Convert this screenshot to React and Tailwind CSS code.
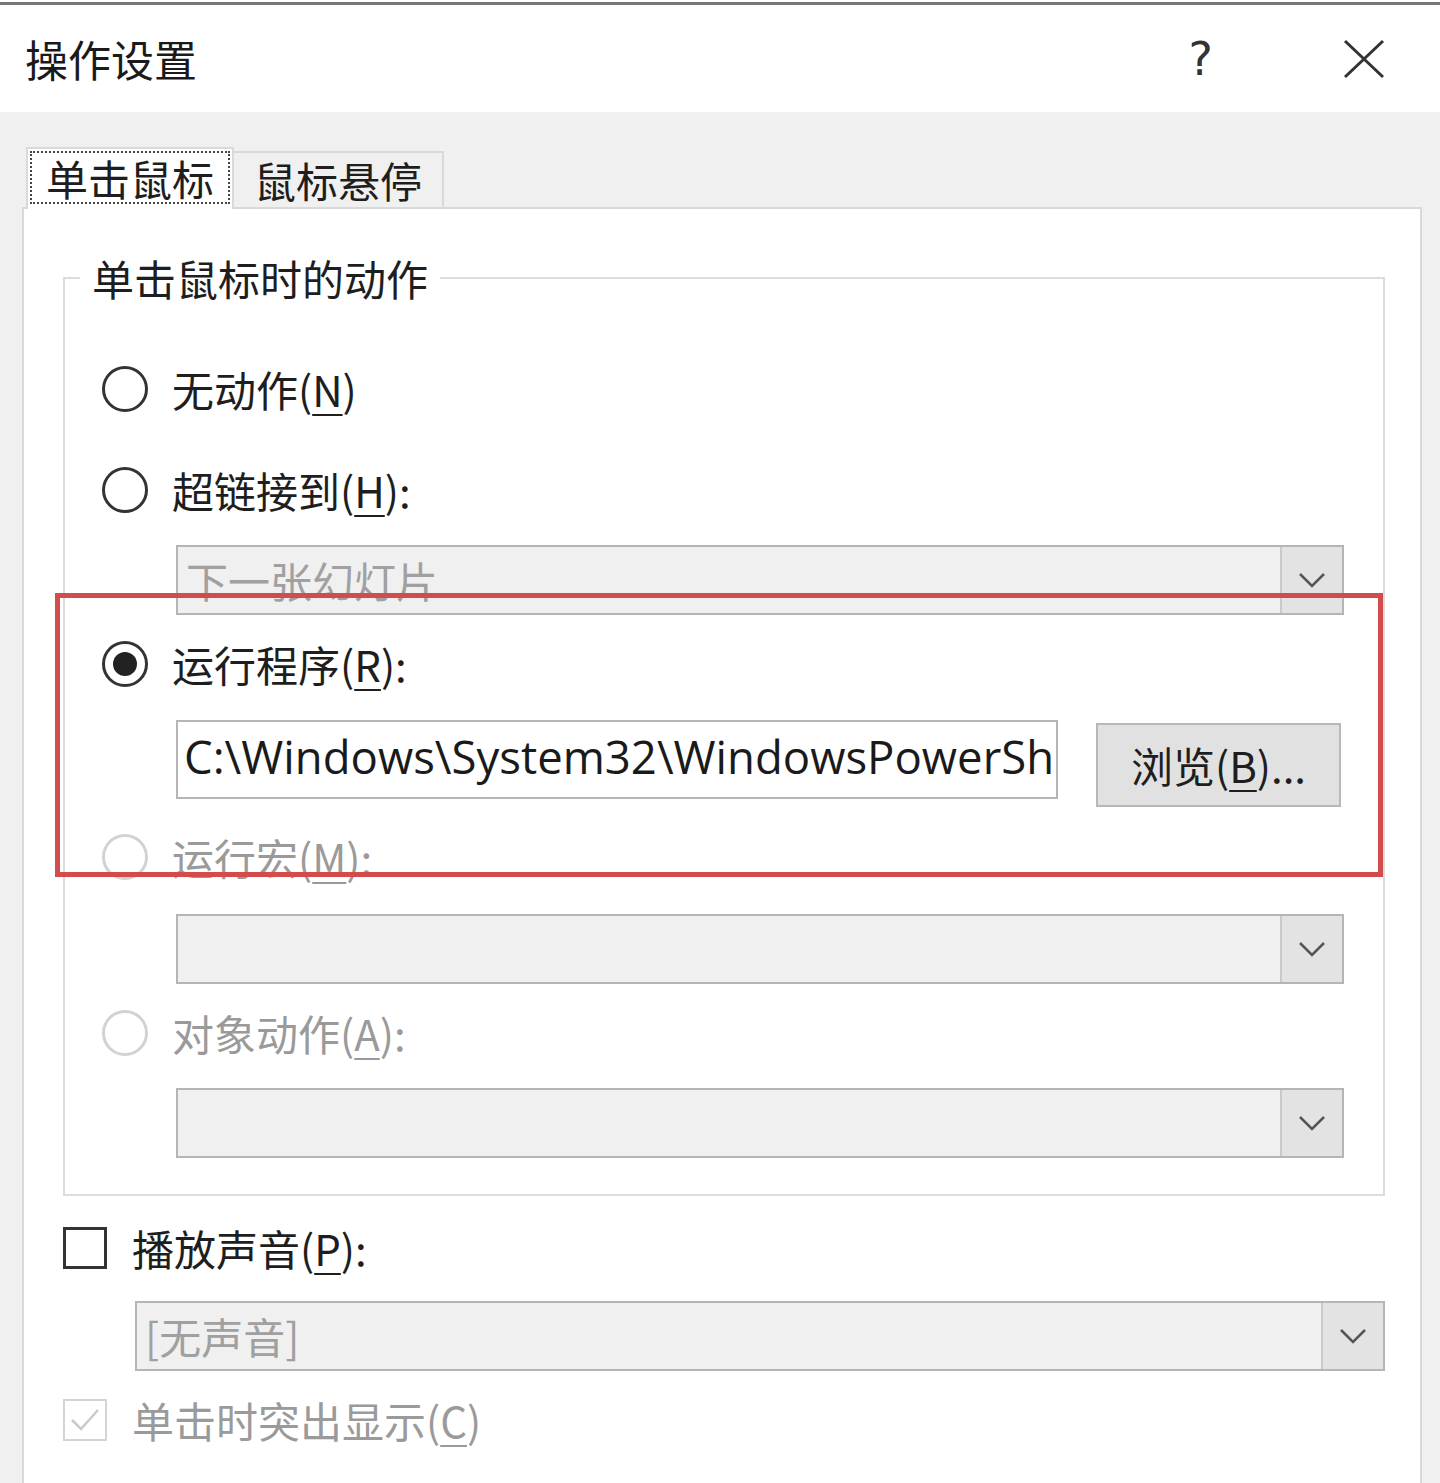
import React from 'react';

const Chevron = () => (
  <svg width="28" height="16" viewBox="0 0 28 16" fill="none">
    <path d="M2 2 L14 14 L26 2" stroke="#555" strokeWidth="2.5" />
  </svg>
);

const Key = ({ children }) => (
  <span className="underline underline-offset-[7px] decoration-[2px]">{children}</span>
);

// combo box, disabled look
const Combo = ({ text, className }) => (
  <div className={"flex h-[70px] border-2 border-[#b5b5b5] bg-[#f0f0f0] " + className}>
    <div className="flex-1 pl-[8px] flex items-center text-[42px] text-[#a0a0a0] leading-none overflow-hidden whitespace-nowrap">
      {text}
    </div>
    <div className="w-[62px] bg-[#e3e3e3] border-l-2 border-[#cacaca] flex items-center justify-center">
      <Chevron />
    </div>
  </div>
);

const Radio = ({ checked, disabled }) => (
  <div
    className={
      "w-[46px] h-[46px] rounded-full border-[3px] flex items-center justify-center shrink-0 " +
      (disabled ? "border-[#d2d2d2]" : "border-[#333]")
    }
  >
    {checked && <div className="w-[24px] h-[24px] rounded-full bg-[#222]" />}
  </div>
);

const RadioRow = ({ checked, disabled, children, className }) => (
  <div className={"flex items-center h-[60px] pl-[37px] " + className}>
    <Radio checked={checked} disabled={disabled} />
    <span
      className={
        "ml-[24px] text-[42px] leading-none " + (disabled ? "text-[#9a9a9a]" : "text-[#1e1e1e]")
      }
    >
      {children}
    </span>
  </div>
);

export default function App() {
  return (
    <div className="w-[1440px] h-[1483px] overflow-hidden bg-[#f0f0f0] relative font-['Noto_Sans_CJK_SC','Noto_Sans',sans-serif]">
      {/* title bar */}
      <div className="bg-white">
        <div className="h-[2px]" />
        <div className="h-[3px] bg-[#767676]" />
        <div className="h-[107px] flex items-center pl-[25px] pr-[55px]">
          <span className="text-[43px] text-[#1a1a1a] leading-none">操作设置</span>
          <span className="ml-auto text-[46px] text-[#333] font-['DejaVu_Sans',sans-serif] leading-none">?</span>
          <svg className="ml-[130px]" width="42" height="40" viewBox="0 0 42 40">
            <path d="M2 2 L40 38 M40 2 L2 38" stroke="#333" strokeWidth="3" />
          </svg>
        </div>
      </div>

      {/* tabs + page */}
      <div className="pt-[35px] pl-[22px] pr-[18px]">
        <div className="flex items-end -mb-[2px]">
          <div className="ml-[4px] w-[208px] h-[62px] bg-white border-2 border-b-0 border-[#d9d9d9] relative z-10 p-[2px]">
            <div className="h-[53px] border-2 border-dotted border-[#444] flex items-center justify-center text-[42px] text-[#1e1e1e] leading-none">
              单击鼠标
            </div>
          </div>
          <div className="w-[210px] h-[58px] bg-[#f0f0f0] border-2 border-l-0 border-[#d9d9d9] flex items-center justify-center text-[42px] text-[#1e1e1e] leading-none">
            鼠标悬停
          </div>
        </div>

        <div className="bg-white border-2 border-[#d9d9d9] h-[1300px] pl-[39px] pr-[35px]">
          <fieldset className="mt-[45px] border-2 border-[#dcdcdc] pb-[36px]">
            <legend className="ml-[15px] px-[12px] h-[48px] leading-[48px] text-[42px] text-[#1e1e1e]">
              单击鼠标时的动作
            </legend>

            <RadioRow className="mt-[57px]">
              无动作(<Key>N</Key>)
            </RadioRow>
            <RadioRow className="mt-[41px]">
              超链接到(<Key>H</Key>):
            </RadioRow>
            <Combo text="下一张幻灯片" className="mt-[25px] ml-[111px] w-[1168px] h-[68px]" />

            <RadioRow checked className="mt-[19px]">
              运行程序(<Key>R</Key>):
            </RadioRow>
            <div className="mt-[26px] ml-[111px] flex items-start">
              <div className="w-[882px] h-[79px] border-2 border-[#b5b5b5] bg-white flex items-center pl-[6px] pb-[6px] overflow-hidden whitespace-nowrap text-[45.5px] text-[#1a1a1a] font-['Open_Sans',sans-serif] leading-none">
                C:\Windows\System32\WindowsPowerSh
              </div>
              <div className="ml-[38px] mt-[3px] w-[245px] h-[84px] bg-[#e1e1e1] border-2 border-[#b8b8b8] flex items-center justify-center text-[42px] text-[#1e1e1e] leading-none whitespace-nowrap">
                浏览(<Key>B</Key>)...
              </div>
            </div>

            <RadioRow disabled className="mt-[20px]">
              运行宏(<Key>M</Key>):
            </RadioRow>
            <Combo text="" className="mt-[27px] ml-[111px] w-[1168px] h-[69px]" />

            <RadioRow disabled className="mt-[19px]">
              对象动作(<Key>A</Key>):
            </RadioRow>
            <Combo text="" className="mt-[25px] ml-[111px] w-[1168px]" />
          </fieldset>

          <div className="mt-[22px] h-[60px] flex items-center">
            <div className="w-[44px] h-[42px] border-[3px] border-[#333] shrink-0" />
            <span className="ml-[25px] text-[42px] text-[#1e1e1e] leading-none">
              播放声音(<Key>P</Key>):
            </span>
          </div>
          <Combo text="[无声音]" className="mt-[23px] ml-[72px]" />

          <div className="mt-[19px] h-[60px] flex items-center">
            <div className="w-[44px] h-[42px] border-2 border-[#d4d4d4] shrink-0 flex items-center justify-center">
              <svg width="32" height="26" viewBox="0 0 32 26" fill="none">
                <path d="M3 13 L12 22 L29 3" stroke="#c9c9c9" strokeWidth="2.5" />
              </svg>
            </div>
            <span className="ml-[25px] text-[42px] text-[#9a9a9a] leading-none">
              单击时突出显示(<Key>C</Key>)
            </span>
          </div>
        </div>
      </div>

      {/* red highlight annotation drawn over the dialog */}
      <div className="absolute left-[55px] top-[593px] w-[1328px] h-[284px] border-[5px] border-[#d24c4c]" />
    </div>
  );
}
